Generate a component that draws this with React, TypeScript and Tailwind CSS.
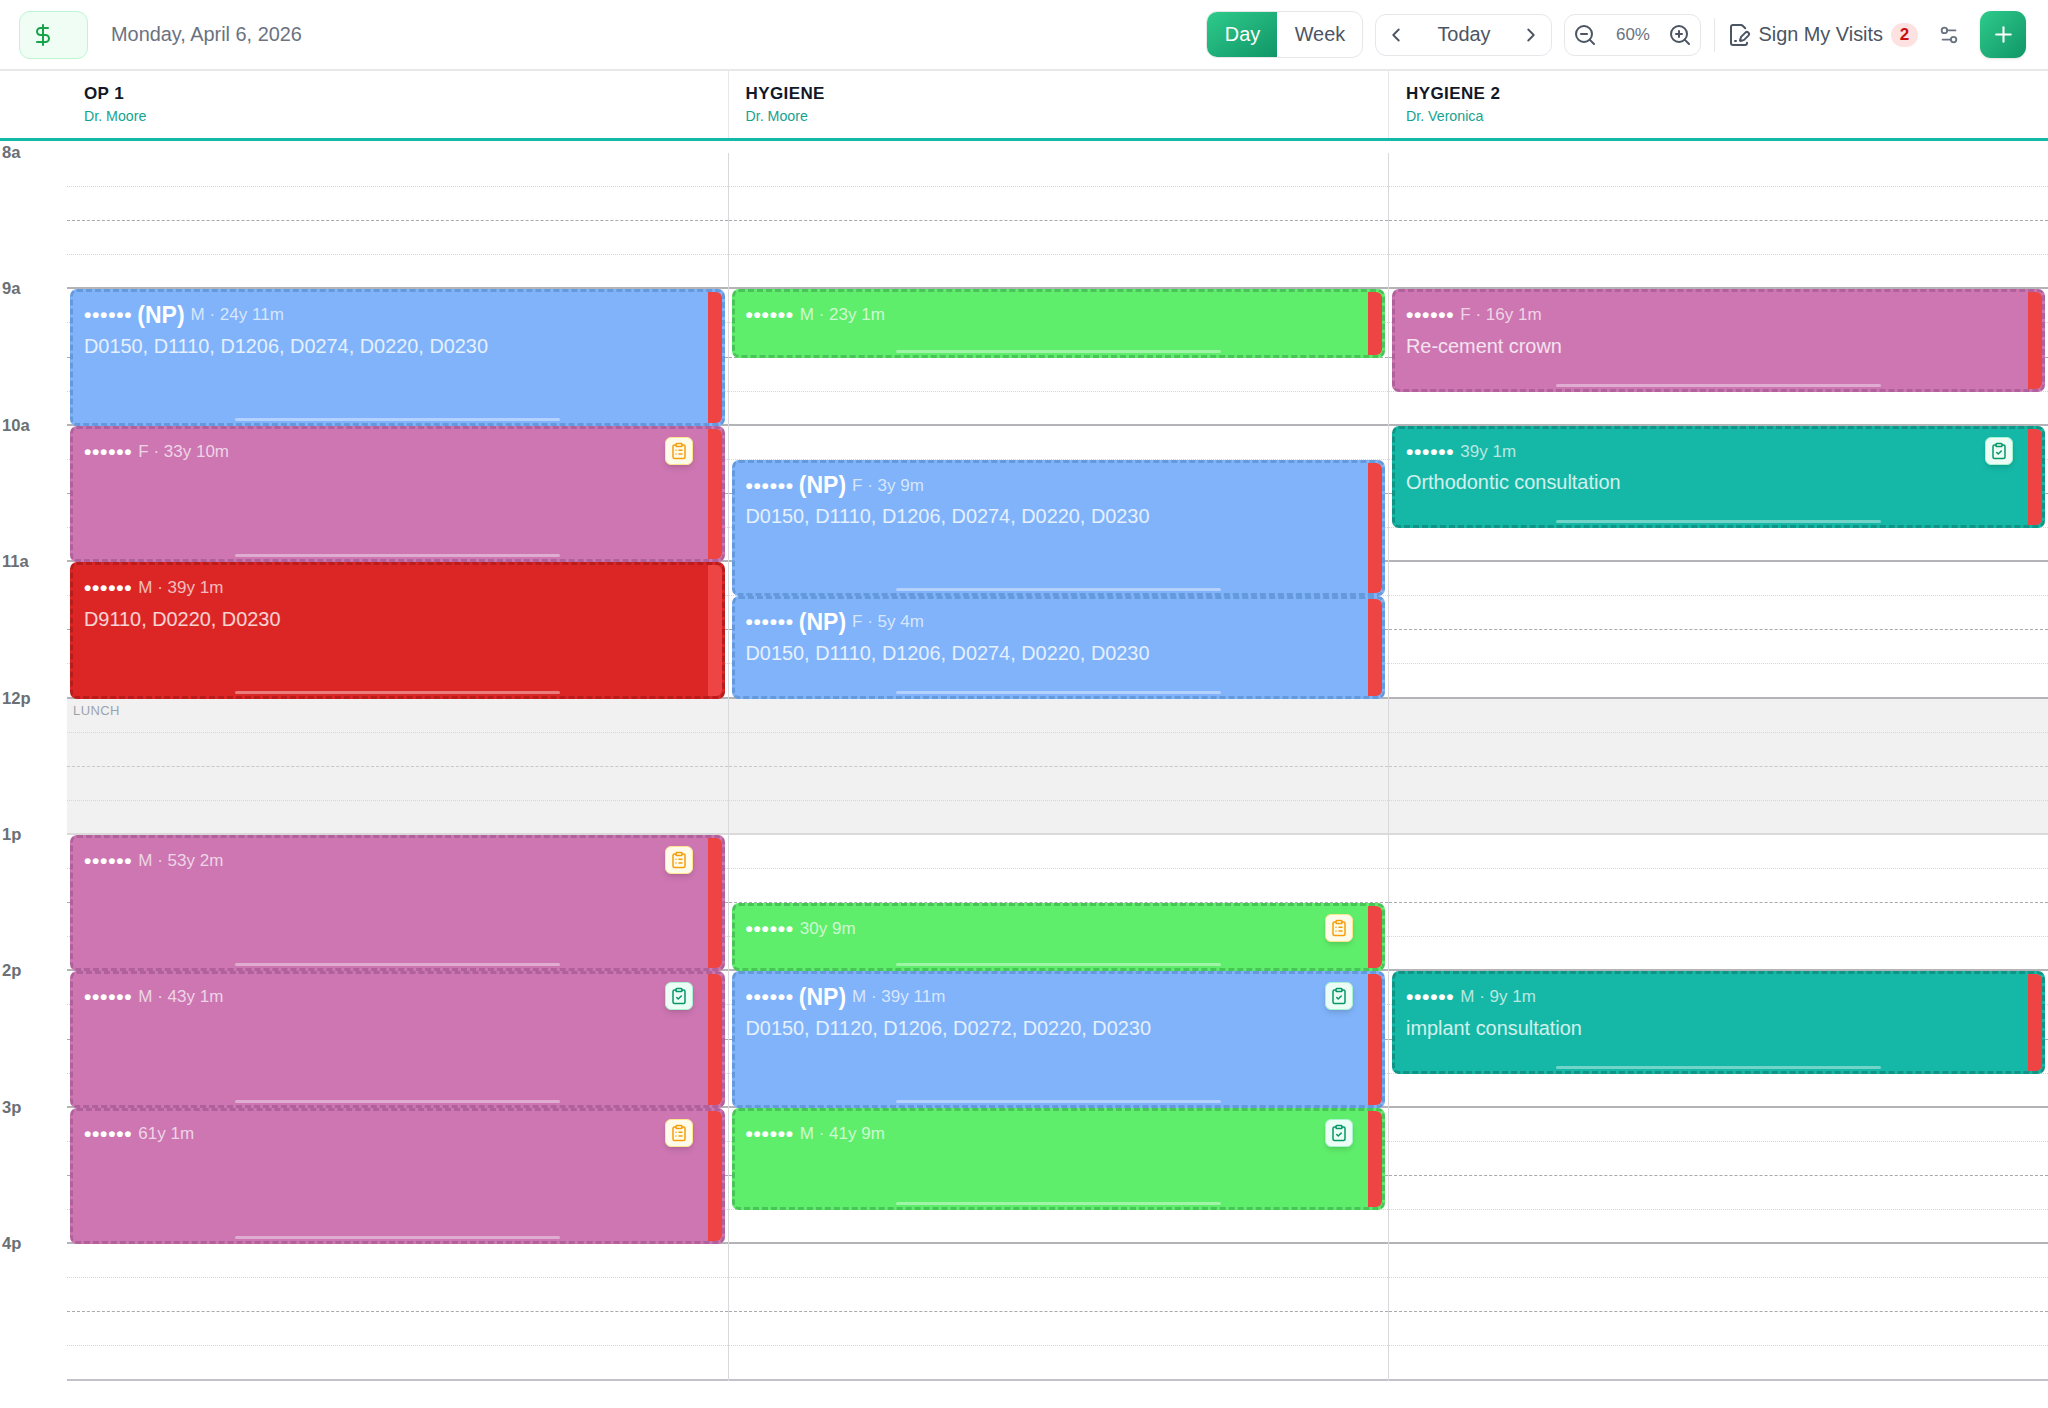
import { ChevronLeft, ChevronRight, ClipboardCheck, ClipboardList, DollarSign, FilePenLine, Plus, Settings2, ZoomIn, ZoomOut } from "lucide-react"

const HOUR = 136.4

const hours = ["8a", "9a", "10a", "11a", "12p", "1p", "2p", "3p", "4p"]

const columns = [
  { name: "OP 1", doctor: "Dr. Moore" },
  { name: "HYGIENE", doctor: "Dr. Moore" },
  { name: "HYGIENE 2", doctor: "Dr. Veronica" },
]

type Tone = "blue" | "pink" | "green" | "teal" | "red"

interface Visit {
  col: number
  start: number
  end: number
  tone: Tone
  np?: boolean
  meta: string
  text?: string
  badge?: "list" | "check"
}

const toneClass: Record<Tone, string> = {
  blue: "bg-[#80b3fa] border-[#6499dc]",
  pink: "bg-[#cd76b2] border-[#b0619b]",
  green: "bg-[#5fee6b] border-[#48c458]",
  teal: "bg-[#15b8a6] border-[#0f9485]",
  red: "bg-[#dc2626] border-[#b91c1c]",
}

const CODES = "D0150, D1110, D1206, D0274, D0220, D0230"

const visits: Visit[] = [
  { col: 0, start: 9, end: 10, tone: "blue", np: true, meta: "M · 24y 11m", text: CODES },
  { col: 0, start: 10, end: 11, tone: "pink", meta: "F · 33y 10m", badge: "list" },
  { col: 0, start: 11, end: 12, tone: "red", meta: "M · 39y 1m", text: "D9110, D0220, D0230" },
  { col: 0, start: 13, end: 14, tone: "pink", meta: "M · 53y 2m", badge: "list" },
  { col: 0, start: 14, end: 15, tone: "pink", meta: "M · 43y 1m", badge: "check" },
  { col: 0, start: 15, end: 16, tone: "pink", meta: "61y 1m", badge: "list" },
  { col: 1, start: 9, end: 9.5, tone: "green", meta: "M · 23y 1m" },
  { col: 1, start: 10.25, end: 11.25, tone: "blue", np: true, meta: "F · 3y 9m", text: CODES },
  { col: 1, start: 11.25, end: 12, tone: "blue", np: true, meta: "F · 5y 4m", text: CODES },
  { col: 1, start: 13.5, end: 14, tone: "green", meta: "30y 9m", badge: "list" },
  { col: 1, start: 14, end: 15, tone: "blue", np: true, meta: "M · 39y 11m", text: "D0150, D1120, D1206, D0272, D0220, D0230", badge: "check" },
  { col: 1, start: 15, end: 15.75, tone: "green", meta: "M · 41y 9m", badge: "check" },
  { col: 2, start: 9, end: 9.75, tone: "pink", meta: "F · 16y 1m", text: "Re-cement crown" },
  { col: 2, start: 10, end: 10.75, tone: "teal", meta: "39y 1m", text: "Orthodontic consultation", badge: "check" },
  { col: 2, start: 14, end: 14.75, tone: "teal", meta: "M · 9y 1m", text: "implant consultation" },
]

function VisitCard({ visit }: { visit: Visit }) {
  return (
    <div
      className={`absolute left-[3px] right-[3px] overflow-hidden rounded-[7px] border-[3px] border-dashed text-white ${toneClass[visit.tone]}`}
      style={{ top: (visit.start - 8) * HOUR, height: (visit.end - visit.start) * HOUR }}
    >
      <div className="pl-[11px] pt-[10.5px]">
        <div className="flex h-[24px] items-center whitespace-nowrap">
          <span className="text-[21px] font-bold tracking-[0.7px]">••••••</span>
          {visit.np && <span className="ml-[5px] text-[23px] font-bold">(NP)</span>}
          <span className="ml-[6px] text-[17px] text-white/70">{visit.meta}</span>
        </div>
        {visit.text && <p className="mt-[6px] text-[19.9px] leading-[26px] text-white/80">{visit.text}</p>}
      </div>
      {visit.badge === "list" && (
        <div className="absolute right-[29px] top-[8px] flex h-[28px] w-[28px] items-center justify-center rounded-[6px] border border-[#fde68a] bg-[#fffbeb] shadow-md">
          <ClipboardList className="h-[18px] w-[18px] text-[#f59e0b]" />
        </div>
      )}
      {visit.badge === "check" && (
        <div className="absolute right-[29px] top-[8px] flex h-[28px] w-[28px] items-center justify-center rounded-[6px] border border-[#a7f3d0] bg-[#ecfdf5] shadow-md">
          <ClipboardCheck className="h-[18px] w-[18px] text-[#059669]" />
        </div>
      )}
      <div className="absolute bottom-[2px] left-1/2 h-[3px] w-[325px] -translate-x-[162px] rounded-full bg-white/40" />
      <div className="absolute bottom-0 right-0 top-0 w-[14px] rounded-r-[6px] bg-[#ef4444]" />
    </div>
  )
}

function HourBlock({ lunch, last }: { lunch?: boolean; last?: boolean }) {
  return (
    <div className={`flex h-[136.4px] flex-col ${lunch ? "bg-[#f1f1f1]" : ""}`}>
      <div className="h-[34.1px] border-b border-dotted border-[#d6d6da]" />
      <div className={`h-[34.1px] border-b border-dashed ${lunch ? "border-[#c8c8c8]" : "border-[#a9a9ae]"}`} />
      <div className="h-[34.1px] border-b border-dotted border-[#d6d6da]" />
      <div className={`h-[34.1px] border-b-2 ${lunch ? "border-[#dadada]" : last ? "border-[#c2c2ca]" : "border-[#b4b4b8]"}`} />
    </div>
  )
}

export default function App() {
  return (
    <div className="h-[1408px] w-[2048px] overflow-hidden bg-white font-['Liberation_Sans',sans-serif]">
      <header className="flex h-[71px] items-center border-b-2 border-[#e8e8ea] pl-[19px] pr-[22px]">
        <button className="flex h-[48px] w-[69px] items-center rounded-[11px] border border-[#bbf7d0] bg-[#f0fdf4] pl-[11px] text-[#16a34a]">
          <DollarSign className="h-[24px] w-[24px]" />
        </button>
        <span className="ml-[23px] pt-[1px] text-[19.9px] text-[#6b7280]">Monday, April 6, 2026</span>

        <div className="ml-auto flex h-[47px] w-[157px] overflow-hidden rounded-[11px] border border-[#e5e7eb]">
          <span className="flex w-[70px] items-center justify-center bg-gradient-to-br from-[#2ecb8b] to-[#0f9668] pt-[1px] text-[19.9px] text-white">Day</span>
          <span className="flex flex-1 items-center justify-center pt-[1px] text-[19.9px] text-[#4b5563]">Week</span>
        </div>
        <div className="ml-[12px] flex h-[42px] w-[177px] items-center justify-between rounded-[11px] border border-[#e5e7eb] px-[9px] text-[#4b5563]">
          <ChevronLeft className="h-[22px] w-[22px]" />
          <span className="pt-[1px] text-[19.9px]">Today</span>
          <ChevronRight className="h-[22px] w-[22px]" />
        </div>
        <div className="ml-[12px] flex h-[42px] w-[137px] items-center justify-between rounded-[11px] border border-[#e5e7eb] px-[8px] text-[#4b5563]">
          <ZoomOut className="h-[24px] w-[24px]" />
          <span className="pt-[1px] text-[17px] text-[#6b7280]">60%</span>
          <ZoomIn className="h-[24px] w-[24px]" />
        </div>
        <div className="ml-[13px] h-[34px] w-px bg-[#e5e7eb]" />
        <FilePenLine className="ml-[12px] h-[24px] w-[24px] text-[#4b5563]" />
        <span className="ml-[7px] pt-[1px] text-[19.9px] text-[#4b5563]">Sign My Visits</span>
        <span className="ml-[8px] flex h-[24px] w-[27px] items-center justify-center rounded-full bg-[#fee2e2] text-[17px] font-bold text-[#c81010]">2</span>
        <Settings2 className="ml-[20px] h-[22px] w-[22px] text-[#6b7280]" />
        <button className="ml-[20px] flex h-[47px] w-[46px] items-center justify-center rounded-[11px] bg-gradient-to-br from-[#2ecb8b] to-[#0f9668] text-white shadow-sm">
          <Plus className="h-[25px] w-[25px]" />
        </button>
      </header>

      <div className="flex h-[70px] border-b-[3px] border-[#14b8a6]">
        <div className="w-[67px] shrink-0" />
        {columns.map((column, i) => (
          <div key={column.name} className={`w-[660.5px] shrink-0 pl-[17px] pt-[12px] ${i > 0 ? "border-l border-[#e5e7eb]" : ""}`}>
            <p className="text-[17px] font-bold leading-[22px] tracking-[0.4px] text-[#111827]">{column.name}</p>
            <p className="text-[14.2px] leading-[22px] text-[#14a38f]">{column.doctor}</p>
          </div>
        ))}
      </div>

      <div className="relative mt-[12px] flex">
        <div className="w-[67px] shrink-0">
          {hours.map((hour) => (
            <div key={hour} className="h-[136.4px]">
              <span className="block -translate-y-1/2 pl-[2px] text-[16.6px] font-bold leading-[22px] text-[#6b7075]">{hour}</span>
            </div>
          ))}
        </div>
        {columns.map((column, col) => (
          <div
            key={column.name}
            className={`relative shrink-0 ${col > 0 ? "border-l border-[#d9d9dd]" : ""} ${col === 2 ? "w-[659.5px]" : "w-[660.5px]"}`}
          >
            {hours.map((hour, i) => (
              <HourBlock key={hour} lunch={hour === "12p"} last={i === hours.length - 1} />
            ))}
            {col === 0 && (
              <span className="absolute left-[6px] top-[548px] text-[13px] tracking-[0.4px] text-[#9ca3af]">LUNCH</span>
            )}
            {visits
              .filter((visit) => visit.col === col)
              .map((visit) => (
                <VisitCard key={`${visit.col}-${visit.start}`} visit={visit} />
              ))}
          </div>
        ))}
      </div>
    </div>
  )
}
